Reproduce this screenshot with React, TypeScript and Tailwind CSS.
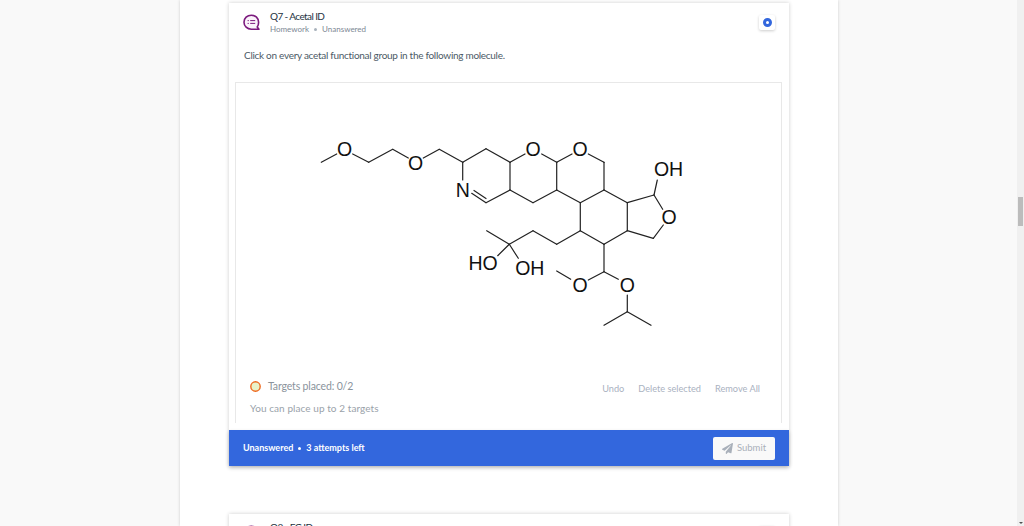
import { FaPaperPlane } from "react-icons/fa";

const bonds: number[][] = [
  [321.3,162.3,336.7,154],[352.7,154,368.7,162.3],[368.7,162.3,392.7,149.3],[392.7,149.3,408.3,158],
  [423.3,158,439.3,149.3],[439.3,149.3,462.7,162.3],[462.7,162.3,486,148.7],[486,148.7,510,162.3],
  [462.7,162.3,462.7,180],[471.7,193.3,486,202.7],[474,190.5,486,198.5],[486,202.7,510,190],
  [510,162.3,510,190],[510,162.3,525,154],[541.7,154,556.7,162.3],[556.7,162.3,572,154],
  [588.3,154,604,162.3],[604,162.3,604,190],[556.7,162.3,556.7,190],[510,190,533,202.7],
  [533,202.7,556.7,190],[556.7,190,580.3,202.7],[580.3,202.7,604,190],[604,190,627.3,202.7],
  [580.3,202.7,580.3,230.7],[627.3,202.7,627.3,230.7],[580.3,230.7,604,244.3],[604,244.3,627.3,230.7],
  [627.3,202.7,654,195],[654,195,657.3,180],[654,195,662.7,209.3],[663.3,225,653.3,238.3],
  [653.3,238.3,627.3,230.7],[580.3,230.7,556.7,244.3],[556.7,244.3,533,230.7],[533,230.7,509.3,244.3],
  [509.3,244.3,486.7,230.7],[509.3,244.3,497.7,255.7],[509.3,244.3,518.3,258.3],
  [604,244.3,604,271.7],[604,271.7,588.3,280],[604,271.7,618.3,279.3],[570.7,279.3,556.7,271],
  [627.3,295,627.3,311.7],[627.3,311.7,604,325.3],[627.3,311.7,651,325.3],
];

const labels: [string, number, number][] = [
  ["O",344.7,156.2],["O",415.7,169.6],["N",462.7,197],["O",533,156.2],["O",580,156.2],["OH",668.5,175.8],["O",669,224.2],
  ["HO",483,270.2],["OH",529.8,275.2],["O",580,291.9],["O",627.3,291.9],
];

function Molecule() {
  return (
    <svg width={1024} height={526} viewBox="0 0 1024 526" className="block">
      {bonds.map((b, i) => (
        <line key={i} x1={b[0]} y1={b[1]} x2={b[2]} y2={b[3]} stroke="#222" strokeWidth={1.2} strokeLinecap="round" />
      ))}
      {labels.map(([t, x, y], i) => (
        <text key={i} x={x} y={y} textAnchor="middle" fontSize={19.5} fill="#111" fontFamily="'Liberation Sans', Arial, sans-serif">{t}</text>
      ))}
    </svg>
  );
}

function ChatIcon({ className = "" }: { className?: string }) {
  return (
    <svg width={17} height={18} viewBox="0 0 17 18" className={className}>
      <path d="M8.3 1.2C4.2 1.2 1 4.2 1 8.2s3.2 7 7.3 7h7.7l-1.8-2.1c.9-1.2 1.4-3 1.4-4.9 0-4-3.2-7-7.3-7z" fill="#fbf3fb" stroke="#7b1a7d" strokeWidth={1.6} strokeLinejoin="round" />
      <path d="M7.2 6.6h5M7.2 9.4h5" stroke="#7b1a7d" strokeWidth={1} />
      <path d="M4.6 6.6h1.2M4.6 9.4h1.2" stroke="#7b1a7d" strokeWidth={1} />
    </svg>
  );
}

function Header({ title, current }: { title: string; current?: boolean }) {
  return (
    <header className="flex items-start justify-between px-[14px] pt-[7px]">
      <div className="flex items-start gap-[10px]">
        <ChatIcon className="mt-[4px]" />
        <div>
          <div className="text-[10px] leading-[12px] tracking-[-0.6px] text-[#25323f]">{title}</div>
          {current && (
            <div className="mt-[1px] flex items-center gap-[5px] text-[8px] leading-[12px] text-[#7d8894]">
              <span>Homework</span>
              <span className="h-[3px] w-[3px] rounded-full bg-[#a9b2bc]" />
              <span>Unanswered</span>
            </div>
          )}
        </div>
      </div>
      <div className="mt-[5px] flex h-[15px] w-[16px] items-center justify-center rounded-[2px] bg-white shadow-[0_1px_3px_rgba(0,0,0,0.2)]">
        {current && <span className="h-[9px] w-[9px] rounded-full border-[3px] border-[#3367dd] bg-white" />}
      </div>
    </header>
  );
}

export default function App() {
  return (
    <div className="relative h-[526px] w-[1024px] overflow-hidden bg-[#f9f9f9] font-['Lato','Noto_Sans',sans-serif]">
      <div className="flex h-full">
        <div className="w-[180px] shrink-0" />
        <main className="h-full w-[658px] shrink-0 overflow-hidden bg-white px-[49px] pt-[3px] shadow-[0_0_3px_rgba(0,0,0,0.18)]">
          <section className="flex h-[463px] w-[560px] flex-col bg-white shadow-[0_0_4px_rgba(0,0,0,0.2)]">
            <Header title="Q7 - Acetal ID" current />
            <p className="ml-[15px] mt-[13px] text-[10px] leading-[14px] tracking-[-0.29px] text-[#4c5a66]">Click on every acetal functional group in the following molecule.</p>
            <div className="relative mb-[7px] ml-[6px] mt-[20px] flex w-[547px] flex-1 flex-col overflow-hidden border-x border-t border-[#e8e8e8]">
              <div className="absolute left-[-236px] top-[-83px]"><Molecule /></div>
              <div className="mt-auto flex items-start justify-between pb-[8px] pl-[14px] pr-[21px]">
                <div>
                  <div className="flex items-center gap-[7px]">
                    <svg width={11} height={11} viewBox="0 0 11 11">
                      <circle cx={5.5} cy={5.5} r={4.7} fill="#e9f2c8" stroke="#ee6a1f" strokeWidth={1.4} />
                    </svg>
                    <span className="text-[10.5px] leading-[14px] tracking-[-0.15px] text-[#8a939c]">Targets placed: 0/2</span>
                  </div>
                  <div className="mt-[8px] text-[10px] leading-[14px] tracking-[0.07px] text-[#9aa2aa]">You can place up to 2 targets</div>
                </div>
                <div className="mt-[3px] flex gap-[14px] text-[9.2px] leading-[14px] text-[#aab2bf]">
                  <span>Undo</span>
                  <span>Delete selected</span>
                  <span>Remove All</span>
                </div>
              </div>
            </div>
            <footer className="flex h-[36px] items-center justify-between bg-[#3367dd] px-[14px] text-white shadow-[0_2px_4px_rgba(0,0,0,0.2)]">
              <div className="flex items-center gap-[4px] text-[9px] font-bold leading-[12px]">
                <span>Unanswered</span>
                <span className="mx-[1px] h-[3px] w-[3px] rounded-full bg-white" />
                <span>3 attempts left</span>
              </div>
              <div className="flex h-[23px] w-[62px] items-center justify-center gap-[4px] rounded-[2px] bg-[#f9f9f9] text-[9.5px] text-[#a9b0ba]">
                <FaPaperPlane size={11} color="#a9b0ba" />
                <span>Submit</span>
              </div>
            </footer>
          </section>
          <section className="mt-[48px] h-[60px] w-[560px] bg-white shadow-[0_0_4px_rgba(0,0,0,0.2)]">
            <Header title="Q8 - FG ID" />
          </section>
        </main>
        <div className="flex-1" />
        <aside className="relative h-full w-[7px] shrink-0 bg-[#f0f0f0]">
          <div className="absolute left-[1px] top-[197px] h-[29px] w-[5px] bg-[#bcbcbc]" />
          <div className="absolute bottom-[2px] left-[2px] h-0 w-0 border-x-[2px] border-t-[2px] border-x-transparent border-t-[#505050]" />
        </aside>
      </div>
    </div>
  );
}
